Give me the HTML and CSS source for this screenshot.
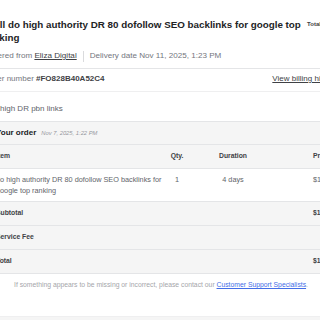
FILE: index.html
```html
<!DOCTYPE html>
<html lang="en">
<head>
  <meta charset="UTF-8" />
  <meta name="viewport" content="width=device-width, initial-scale=1.0"/>
  <title>Order details</title>
  <link rel="stylesheet" href="styles.css">
</head>
<body>

  <div class="page">
    <div class="title-row">
      <h1 class="gig-title">I will do high authority DR 80 dofollow SEO backlinks for google top ranking</h1>
      <div class="total-label">Total price</div>
    </div>

    <div class="meta">
      <span>Ordered from <a href="#" class="seller">Eliza Digital</a></span>
      <span class="divider"></span>
      <span>Delivery date Nov 11, 2025, 1:23 PM</span>
    </div>

    <div class="order-number">
      <span>Order number <b>#FO828B40A52C4</b></span>
      <a href="#" class="billing">View billing history</a>
    </div>

    <div class="note">Buy high DR pbn links</div>

    <div class="order-card">
      <div class="card-head">
        <span class="card-title">Your order</span>
        <span class="card-date">Nov 7, 2025, 1:22 PM</span>
      </div>

      <table class="items">
        <colgroup>
          <col class="col-item">
          <col class="col-qty">
          <col class="col-dur">
          <col>
        </colgroup>
        <tr class="head">
          <th>Item</th>
          <th class="center">Qty.</th>
          <th class="center">Duration</th>
          <th class="price">Price</th>
        </tr>
        <tr class="line">
          <td>do high authority DR 80 dofollow SEO backlinks for google top ranking</td>
          <td class="center">1</td>
          <td class="center">4 days</td>
          <td class="price">$10</td>
        </tr>
        <tr class="sum">
          <th>Subtotal</th>
          <td></td>
          <td></td>
          <th class="price">$10</th>
        </tr>
        <tr class="sum">
          <th>Service Fee</th>
          <td></td>
          <td></td>
          <th class="price"></th>
        </tr>
        <tr class="sum">
          <th>Total</th>
          <td></td>
          <td></td>
          <th class="price">$10</th>
        </tr>
      </table>
    </div>

    <p class="help">If something appears to be missing or incorrect, please contact our <a href="#">Customer Support Specialists</a>.</p>

    <div class="bottom-band"></div>
  </div>

</body>
</html>
```

FILE: styles.css
```css
html, body {
  overflow: hidden;
}

body {
  margin: 0;
  font-family: "Liberation Sans", Arial, sans-serif;
  background-color: #fff;
  color: #404145;
}

.page {
  width: 354px;
  margin-left: -16px;
}

.title-row {
  display: flex;
  align-items: flex-start;
  gap: 3px;
  padding-top: 18px;
}

.gig-title {
  flex: none;
  width: 320px;
  margin: 0;
  font-size: 9.8px;
  line-height: 13px;
  font-weight: bold;
  color: #222325;
}

.total-label {
  font-size: 6px;
  line-height: 13px;
  font-weight: bold;
  white-space: nowrap;
  color: #404145;
}

.meta {
  display: flex;
  align-items: center;
  margin-top: 6px;
  padding-bottom: 6px;
  border-bottom: 1px solid #e4e5e7;
  font-size: 8.1px;
  line-height: 12px;
  color: #74767e;
}

.seller {
  color: #404145;
}

.divider {
  width: 1px;
  height: 11px;
  margin: 0 6px;
  background-color: #dadbdd;
}

.order-number {
  display: flex;
  justify-content: space-between;
  padding: 4px 0 6px;
  border-bottom: 1px solid #efeff0;
  font-size: 8px;
  line-height: 12px;
  color: #74767e;
  white-space: nowrap;
}

.order-number b {
  color: #404145;
}

.billing {
  color: #404145;
}

.note {
  padding: 11px 0 6px;
  font-size: 8px;
  line-height: 12px;
  color: #62646a;
}

.order-card {
  border-top: 1px solid #e4e5e7;
  background-color: #f5f5f5;
}

.card-head {
  display: flex;
  align-items: baseline;
  gap: 5px;
  padding: 5px 12px;
  font-size: 8px;
  line-height: 12px;
}

.card-title {
  font-weight: bold;
  color: #222325;
}

.card-date {
  font-size: 5.8px;
  font-style: italic;
  color: #95979d;
}

.items {
  width: 100%;
  table-layout: fixed;
  border-collapse: collapse;
  font-size: 6.8px;
}

.col-item { width: 184px; }
.col-qty { width: 18px; }
.col-dur { width: 94px; }

.items tr {
  border-top: 1px solid #e4e5e7;
}

.items th,
.items td {
  padding: 5px 0 6px;
  text-align: left;
  vertical-align: top;
  line-height: 12px;
  white-space: nowrap;
}

.items th:first-child,
.items td:first-child {
  padding-left: 12px;
}

.items th {
  font-weight: bold;
  color: #404145;
}

.items .center {
  text-align: center;
}

.items .price {
  padding-left: 33px;
}

.items tr.line {
  background-color: #fff;
}

.items tr.line td {
  padding: 5px 0;
  font-size: 7.3px;
  line-height: 11px;
  color: #62646a;
}

.items tr.line td:first-child {
  padding-left: 12px;
  white-space: normal;
}

.items tr.line td.price {
  padding-left: 33px;
}

.items tr.sum {
  background-color: #f5f5f5;
}

.help {
  margin: 0;
  padding: 6px 0 26px;
  border-top: 1px solid #e4e5e7;
  text-align: center;
  font-size: 6.8px;
  line-height: 10px;
  color: #a5a6aa;
  white-space: nowrap;
}

.help a {
  color: #446ee7;
}

.bottom-band {
  height: 20px;
  border-top: 1px solid #efeff0;
  background-color: #f5f5f5;
}
```
